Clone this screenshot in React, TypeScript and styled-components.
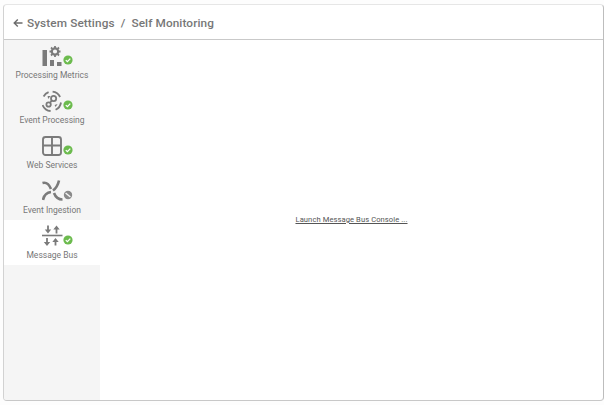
import * as React from "react";
import styled, { createGlobalStyle } from "styled-components";

const Global = createGlobalStyle`
    html, body {
        margin: 0;
        padding: 0;
        background: #ffffff;
    }
    body {
        font-family: Roboto, "Liberation Sans", sans-serif;
    }
`;

const Page = styled.div`
    width: 604px;
    height: 405px;
    box-sizing: border-box;
    padding: 4px 0 4px 3px;
    overflow: hidden;
    background: #fdfdfd;
`;
const Panel = styled.div`
    height: 100%;
    box-sizing: border-box;
    display: flex;
    flex-direction: column;
    background: white;
    border: 1px solid #d2d2d2;
    border-top-color: #e6e6e6;
    border-right-color: #bdbdbd;
    border-bottom-color: #c8c8c8;
    border-radius: 4px;
`;
const Header = styled.div`
    height: 35px;
    flex: none;
    box-sizing: border-box;
    display: flex;
    align-items: center;
    padding: 1px 0 0 9px;
    border-bottom: 1px solid #c9c9c9;
`;
const BackIcon = styled.svg`
    width: 10px;
    height: 10px;
    margin-right: 4px;
`;
const Title = styled.div`
    font-size: 11.8px;
    font-weight: 500;
    letter-spacing: 0.1px;
    color: #777777;
    white-space: pre;
`;
const Body = styled.div`
    flex: 1;
    display: flex;
    min-height: 0;
`;
const Sidebar = styled.div`
    width: 96px;
    flex: none;
    background: #f5f5f5;
    border-bottom-left-radius: 3px;
`;
const Item = styled.div<{ $active?: boolean }>`
    height: 45px;
    box-sizing: border-box;
    display: flex;
    flex-direction: column;
    align-items: center;
    padding-top: 5px;
    background: ${p => (p.$active ? "white" : "transparent")};
`;
const IconRow = styled.div`
    height: 23px;
    position: relative;
    width: 42px;
    display: flex;
    justify-content: flex-start;
`;
const Badge = styled.svg`
    position: absolute;
    left: 32px;
    top: 10px;
    width: 10px;
    height: 10px;
`;
const ItemIcon = styled.svg`
    width: 24px;
    height: 23px;
    margin-left: 11px;
    flex: none;
`;
const ItemLabel = styled.div`
    margin-top: 1px;
    font-size: 8.5px;
    line-height: 12px;
    color: #777777;
    white-space: nowrap;
`;
const Content = styled.div`
    flex: 1;
    display: flex;
    align-items: center;
    justify-content: center;
`;
const ConsoleLink = styled.a`
    font-size: 7.6px;
    letter-spacing: 0.08px;
    color: #555555;
    text-decoration: underline;
    margin-top: -1px;
`;

const GREY = "#7b7b7b";

const OkBadge = () => (
    <Badge viewBox="0 0 10 10">
        <circle cx="5" cy="5" r="4.6" fill="#6cbb4e" />
        <path d="M2.8 5.1 L4.4 6.6 L7.3 3.6" fill="none" stroke="white" strokeWidth="1.3" />
    </Badge>
);

const OffBadge = () => (
    <Badge viewBox="0 0 10 10">
        <circle cx="5" cy="5" r="4.2" fill="#8a8a8a" />
        <path d="M2.6 3 L7.4 7" fill="none" stroke="#f4f4f4" strokeWidth="1.4" />
    </Badge>
);

const MetricsIcon = () => (
    <ItemIcon viewBox="0 0 24 23">
        <rect x="0.5" y="5" width="4.5" height="16" fill={GREY} />
        <rect x="8" y="15" width="4" height="6" fill={GREY} />
        <rect x="15" y="17" width="4.5" height="4" fill={GREY} />
        <circle cx="13" cy="6.5" r="3.2" fill="none" stroke={GREY} strokeWidth="2.2" />
        <path
            d="M13 1 V3 M13 10 V12 M7.5 6.5 H9.5 M16.5 6.5 H18.5 M9 2.5 L10.4 3.9 M15.6 9.1 L17 10.5 M17 2.5 L15.6 3.9 M10.4 9.1 L9 10.5"
            stroke={GREY}
            strokeWidth="1.8"
        />
    </ItemIcon>
);

const ProcessingIcon = () => (
    <ItemIcon viewBox="0 0 24 23">
        <g fill="none" stroke={GREY} strokeWidth="1.8">
            <path d="M1.6 6.5 A9.6 9.6 0 0 1 6.6 2.2" />
            <path d="M10.6 1.7 A9.6 9.6 0 0 1 18.1 7" />
            <path d="M19 12.5 A9.6 9.6 0 0 1 13.6 19.8" />
            <path d="M8.6 21 A9.6 9.6 0 0 1 0.6 15" />
            <circle cx="11.6" cy="8.5" r="2.6" />
            <circle cx="6.6" cy="14.5" r="2.2" />
            <path d="M9.8 10.6 L8 12.8" />
        </g>
        <path d="M5.6 6 L8.6 6 L6.1 9 Z M12.6 15 L15.6 14 L13.6 17 Z" fill={GREY} />
    </ItemIcon>
);

const WebIcon = () => (
    <ItemIcon viewBox="0 0 24 23">
        <rect x="1" y="2" width="18" height="18" rx="2.5" fill="none" stroke={GREY} strokeWidth="1.9" />
        <path d="M10 2 V20 M1 10.5 H19" stroke={GREY} strokeWidth="1.9" />
    </ItemIcon>
);

const IngestionIcon = () => (
    <ItemIcon viewBox="0 0 24 23">
        <g fill="none" stroke={GREY} strokeWidth="2.6">
            <path d="M0.5 3 C4 2 7 4 9 9" />
            <path d="M17 0.5 C16 5 14.5 8 11 10.5" />
            <path d="M1 20 C2 15 5 12.5 9 12" />
            <path d="M12 13 C13.5 17 16 19.5 20.5 19.5" />
        </g>
    </ItemIcon>
);

const BusIcon = () => (
    <ItemIcon viewBox="0 0 24 23">
        <path d="M0 10.5 H20.5" stroke={GREY} strokeWidth="1.6" />
        <g fill="none" stroke={GREY} strokeWidth="1.8">
            <path d="M6 0.5 V5" />
            <path d="M14.5 8.5 V4" />
            <path d="M5 13 V18" />
            <path d="M13.5 20.5 V16" />
        </g>
        <path d="M2.8 4.5 H9.2 L6 8.5 Z M11.3 4.5 H17.7 L14.5 0.5 Z M1.8 17 H8.2 L5 21 Z M10.3 17 H16.7 L13.5 13 Z" fill={GREY} />
    </ItemIcon>
);

const items = [
    { label: "Processing Metrics", icon: <MetricsIcon />, ok: true },
    { label: "Event Processing", icon: <ProcessingIcon />, ok: true },
    { label: "Web Services", icon: <WebIcon />, ok: true },
    { label: "Event Ingestion", icon: <IngestionIcon />, ok: false },
    { label: "Message Bus", icon: <BusIcon />, ok: true, active: true }
];

export default function App() {
    return (
        <Page>
            <Global />
            <Panel>
                <Header>
                    <BackIcon viewBox="0 0 10 10">
                        <path d="M9.5 5 H1.5 M4.8 1.4 L1.2 5 L4.8 8.6" fill="none" stroke="#6c6c6c" strokeWidth="1.4" />
                    </BackIcon>
                    <Title>System Settings  /  Self Monitoring</Title>
                </Header>
                <Body>
                    <Sidebar>
                        {items.map(item => (
                            <Item key={item.label} $active={item.active}>
                                <IconRow>
                                    {item.icon}
                                    {item.ok ? <OkBadge /> : <OffBadge />}
                                </IconRow>
                                <ItemLabel>{item.label}</ItemLabel>
                            </Item>
                        ))}
                    </Sidebar>
                    <Content>
                        <ConsoleLink>Launch Message Bus Console ...</ConsoleLink>
                    </Content>
                </Body>
            </Panel>
        </Page>
    );
}
